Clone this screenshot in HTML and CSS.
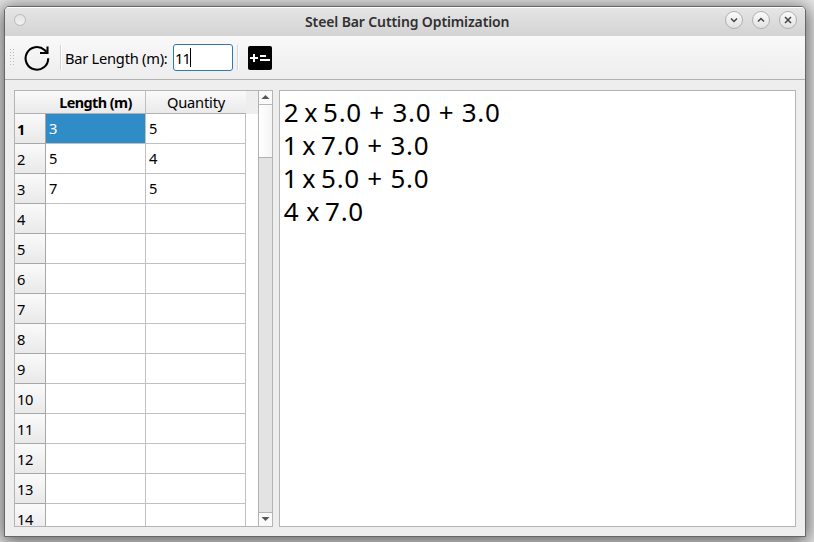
FILE: index.html
```
<!DOCTYPE html>
<html lang="en">
<head>
<meta charset="utf-8">
<title>Steel Bar Cutting Optimization</title>
<link rel="stylesheet" href="styles.css">
</head>
<body>
<main class="window">
  <header class="titlebar">
    <span class="menu-dot"></span>
    <h1 class="title"><span>Steel Bar Cutting Optimization</span></h1>
    <div class="controls">
      <button class="control" aria-label="Minimize"><svg width="18" height="18"><path d="M6 7.500l3 3 3-3"/></svg></button>
      <button class="control" aria-label="Maximize"><svg width="18" height="18"><path d="M6 10.500l3-3 3 3"/></svg></button>
      <button class="control" aria-label="Close"><svg width="18" height="18"><path d="M6 6l6 6M12 6l-6 6"/></svg></button>
    </div>
  </header>
  <div class="toolbar">
    <span class="grip"></span>
    <svg class="reload" width="26" height="26" viewBox="0 0 26 26"><path d="M24.200 13.300A11.300 11.300 0 1 1 20.500 5L23 7.500M23.500 1.500V8H16"/></svg>
    <span class="separator"></span>
    <label class="label" for="bar">Bar Length (m):</label>
    <div class="field" id="bar"><span>11</span><i class="caret"></i></div>
    <span class="separator second"></span>
    <svg class="calc" width="24" height="24" viewBox="0 0 24 24"><rect width="24" height="24" rx="2"/><path d="M2 12h8M6 8v8M12 10h6M12 14h10"/></svg>
  </div>
  <div class="content">
    <section class="table-panel">
      <div class="table">
        <div class="head"><span class="corner"></span><span class="column current"><b>Length (m)</b></span><span class="column"><span class="quantity">Quantity</span></span></div>
        <div class="row"><b>1</b><span class="selected">3</span><span>5</span></div>
        <div class="row"><b>2</b><span>5</span><span>4</span></div>
        <div class="row"><b>3</b><span>7</span><span>5</span></div>
        <div class="row"><b>4</b><span></span><span></span></div>
        <div class="row"><b>5</b><span></span><span></span></div>
        <div class="row"><b>6</b><span></span><span></span></div>
        <div class="row"><b>7</b><span></span><span></span></div>
        <div class="row"><b>8</b><span></span><span></span></div>
        <div class="row"><b>9</b><span></span><span></span></div>
        <div class="row"><b>10</b><span></span><span></span></div>
        <div class="row"><b>11</b><span></span><span></span></div>
        <div class="row"><b>12</b><span></span><span></span></div>
        <div class="row"><b>13</b><span></span><span></span></div>
        <div class="row"><b>14</b><span></span><span></span></div>
      </div>
      <div class="scrollbar">
        <div class="arrow"><svg width="13" height="13"><path d="M2.500 8h8L6.500 4z"/></svg></div>
        <div class="thumb"></div>
        <div class="track"></div>
        <div class="arrow down"><svg width="13" height="13"><path d="M2.500 4h8L6.500 8z"/></svg></div>
      </div>
    </section>
    <section class="output">
      <p>2 <span class="times">x</span> 5.0 + 3.0 + 3.0</p>
      <p class="one">1 <span class="times">x</span> 7.0 + 3.0</p>
      <p class="one">1 <span class="times">x</span> 5.0 + 5.0</p>
      <p class="four">4 <span class="times">x</span> 7.0</p>
    </section>
  </div>
</main>
</body>
</html>
```
FILE: styles.css
```
* { box-sizing: border-box; }
body {
  margin: 0;
  width: 814px;
  height: 542px;
  overflow: hidden;
  padding: 6px 8px 5px 4px;
  background: #e6e6e6;
  font: 14.67px/20px "Noto Sans", sans-serif;
  color: #000;
}
.window {
  width: 802px;
  height: 531px;
  border: 1px solid #666;
  border-radius: 5px 5px 0 0;
  background: #eee;
  box-shadow: 0 3px 18px 2px rgba(0, 0, 0, .6);
  display: flex;
  flex-direction: column;
  overflow: hidden;
}
.titlebar {
  height: 29px;
  flex: none;
  display: flex;
  background: linear-gradient(#e5e5e5, #d3d3d3);
  border-top: 1px solid #fff;
  padding: 0 8.5px 0 9px;
}
.menu-dot {
  width: 12px;
  height: 12px;
  margin-top: 6px;
  border: 1px solid #bbb;
  border-radius: 50%;
  background: linear-gradient(#e4e4e4, #f2f2f2);
}
.title {
  margin: 4px 0 0 279px;
  width: 420px;
  font-size: 14px;
  line-height: 20px;
  font-weight: 600;
  color: #303030;
  letter-spacing: -.12px;
  white-space: nowrap;
}
.controls { display: flex; gap: 9px; margin-top: 3px; margin-left: auto; }
.control {
  width: 18px;
  height: 18px;
  padding: 0;
  border: 1px solid #b0b0b0;
  border-radius: 50%;
  background: linear-gradient(#fafafa, #e2e2e2);
}
.control svg { display: block; margin: -1px; fill: none; stroke: #444; stroke-width: 1.5; }
.toolbar {
  height: 44px;
  flex: none;
  display: flex;
  align-items: center;
  padding-left: 5px;
  border-bottom: 1px solid #b1b1b1;
  background: linear-gradient(#f9f9f9, #ededed);
}
.grip {
  width: 4px;
  height: 17px;
  background: repeating-linear-gradient(transparent 0 1px, #f3f3f3 1px 3px), repeating-linear-gradient(90deg, #bbb 0 1px, transparent 1px 3px);
}
.reload { margin-left: 10px; fill: none; stroke: #000; stroke-width: 2.1; }
.separator { width: 2px; height: 25px; margin-left: 10px; border-left: 1px solid #d4d4d4; border-right: 1px solid #fff; }
.label { margin-left: 3px; width: 108px; white-space: nowrap; letter-spacing: -.25px; }
.field {
  width: 60px;
  height: 27px;
  display: flex;
  align-items: center;
  padding-left: 1px;
  border: 1px solid #3079ad;
  border-radius: 3px;
  background: #fff;
  letter-spacing: -1px;
}
.caret { width: 1px; height: 19px; background: #000; margin-left: 0; }
.separator.second { margin-left: 4px; }
.calc { margin-left: 9px; }
.calc path { fill: none; stroke: #fff; stroke-width: 2; }
.content { flex: 1; display: flex; gap: 6px; padding: 10px 9px 9px; min-height: 0; }
.table-panel { width: 259px; display: flex; border: 1px solid #b4b4b4; background: #fff; overflow: hidden; }
.table { width: 243px; flex: none; overflow: hidden; }
.head, .row { display: grid; grid-template-columns: 31px 100px 100px; }
.head {
  height: 23px;
  background: linear-gradient(90deg, transparent 231px, #eee 231px), linear-gradient(#fafafa, #e9e9e9);
  text-align: center;
  line-height: 22px;
}
.head > span { border-bottom: 1px solid #b0b0b0; }
.head > .column { padding-top: 1px; line-height: 21px; }
.column { border-right: 1px solid #c0c0c0; white-space: nowrap; }
.column:last-child { border-right: 0; }
.current b { font-size: 14.4px; letter-spacing: -.55px; }
.quantity { letter-spacing: -.2px; }
.row { height: 30px; line-height: 28px; }
.row > * { height: 30px; border-right: 1px solid #c0c0c0; border-bottom: 1px solid #c0c0c0; padding: 0 0 0 3px; }
.row > b {
  padding: 2px 0 0 2px;
  line-height: 27px;
  font-weight: 400;
  letter-spacing: -.5px;
  border-color: #a7a7a7;
  background: linear-gradient(#fafafa, #e9e9e9);
}
.row:nth-child(2) > b { font-weight: 700; }
.row > .selected { background: #308cc6; color: #fff; }
.scrollbar {
  width: 14px;
  flex: none;
  display: flex;
  flex-direction: column;
  border-left: 1px solid #b1b1b1;
  background: #e3e3e3;
}
.arrow { height: 14px; flex: none; border-bottom: 1px solid #b8b8b8; background: #fafafa; }
.arrow svg { display: block; fill: #555; }
.arrow.down { border-bottom: 0; border-top: 1px solid #b1b1b1; }
.thumb { height: 53px; flex: none; border-bottom: 1px solid #b1b1b1; background: linear-gradient(90deg, #fff, #f4f4f4); }
.track { flex: 1; }
.output {
  width: 518px;
  padding: 5px 4px;
  border: 1px solid #b4b4b4;
  background: #fff;
  font-size: 26px;
  line-height: 33px;
  letter-spacing: .7px;
}
.output p { margin: 0; white-space: nowrap; }
.times { margin: 0 -2.500px; font-size: 25px; }
.one { text-indent: -1px; }
.one .times { margin-left: -3.500px; }
.four .times { margin-left: -.5px; }
```
